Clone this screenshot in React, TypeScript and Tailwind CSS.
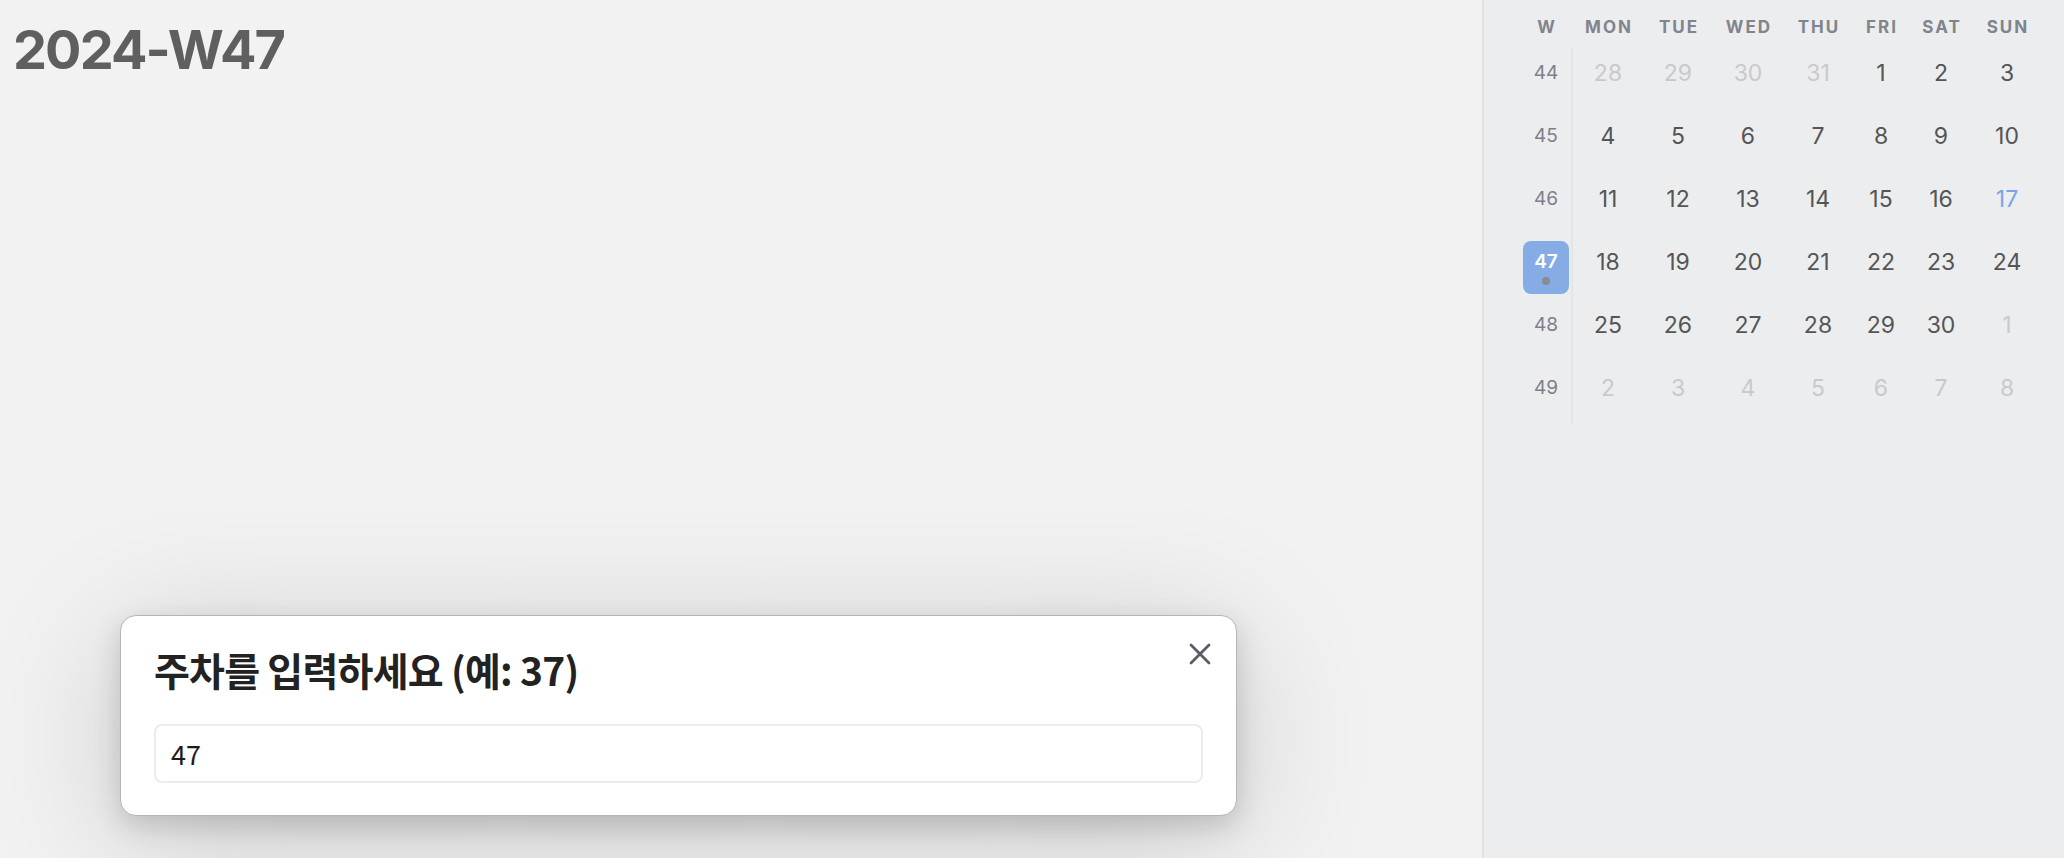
import React from 'react';

type Day = { n: number; tone: 'muted' | 'normal' | 'today' };

const weeks: { w: number; days: Day[] }[] = [
  { w: 44, days: [28, 29, 30, 31].map((n) => ({ n, tone: 'muted' as const })).concat([1, 2, 3].map((n) => ({ n, tone: 'normal' as const }))) },
  { w: 45, days: [4, 5, 6, 7, 8, 9, 10].map((n) => ({ n, tone: 'normal' as const })) },
  { w: 46, days: [11, 12, 13, 14, 15, 16].map((n) => ({ n, tone: 'normal' as const })).concat([{ n: 17, tone: 'today' as const }]) },
  { w: 47, days: [18, 19, 20, 21, 22, 23, 24].map((n) => ({ n, tone: 'normal' as const })) },
  { w: 48, days: [25, 26, 27, 28, 29, 30].map((n) => ({ n, tone: 'normal' as const })).concat([{ n: 1, tone: 'muted' as const }]) },
  { w: 49, days: [2, 3, 4, 5, 6, 7, 8].map((n) => ({ n, tone: 'muted' as const })) },
];

const heads = ['MON', 'TUE', 'WED', 'THU', 'FRI', 'SAT', 'SUN'];

const toneClass = {
  muted: 'text-[#c9c9cb]',
  normal: 'text-[#555555]',
  today: 'text-[#76a5ea]',
};

const Calendar = () => (
  <div className="pl-[37px] font-['Inter',sans-serif]">
    <div className="grid grid-cols-[52px_70px_70px_70px_70px_56px_64px_68px]">
      {/* header */}
      <div className="h-[47px] pt-[18px] text-center text-[17px] leading-[18px] font-bold tracking-[0.12em] text-[#80848c]">W</div>
      {heads.map((h) => (
        <div key={h} className="h-[47px] pt-[18px] pl-[0.12em] text-center text-[17px] leading-[18px] font-bold tracking-[0.12em] text-[#80848c]">
          {h}
        </div>
      ))}

      {weeks.map((row) => (
        <React.Fragment key={row.w}>
          <div className="h-[63px] flex items-center justify-center border-r-2 border-[#e4e5e7]">
            {row.w === 47 ? (
              <div className="w-[46px] h-[53px] rounded-[8px] bg-[#85ace5] flex flex-col items-center justify-center">
                <span className="text-[19px] leading-[24px] font-semibold text-white">47</span>
                <span className="mt-[3px] w-[8px] h-[8px] rounded-full bg-[#8a8b90]" />
              </div>
            ) : (
              <div className="flex flex-col items-center">
                <span className="text-[19px] leading-[24px] text-[#7d8089]">{row.w}</span>
                <span className="mt-[3px] w-[8px] h-[8px]" />
              </div>
            )}
          </div>
          {row.days.map((d, i) => (
            <div key={i} className="h-[63px] flex flex-col items-center justify-center">
              <span className={`text-[23px] leading-[24px] ${toneClass[d.tone]}`}>{d.n}</span>
              <span className="mt-[3px] w-[8px] h-[8px]" />
            </div>
          ))}
        </React.Fragment>
      ))}
    </div>
  </div>
);

const WeekPrompt = () => (
  <div className="absolute left-[120px] top-[615px] w-[1117px] h-[201px] rounded-[16px] bg-white border border-[#b5b5b5] shadow-[0_24px_140px_rgba(0,0,0,0.17),0_10px_28px_rgba(0,0,0,0.16)] px-[33px] pt-[29px]">
    <button className="absolute top-[26px] right-[24px] w-[24px] h-[24px] flex items-center justify-center">
      <svg width="22" height="22" viewBox="0 0 22 22" fill="none" stroke="#5a5d68" strokeWidth="2.8" strokeLinecap="round">
        <line x1="2" y1="2" x2="20" y2="20" />
        <line x1="20" y1="2" x2="2" y2="20" />
      </svg>
    </button>
    <h2 className="text-[39px] leading-[49px] font-bold tracking-[-0.02em] text-[#222222] font-['Noto_Sans_CJK_KR','Noto_Sans',sans-serif]">
      주차를 입력하세요 (예: 37)
    </h2>
    <input
      readOnly
      value="47"
      className="mt-[30px] w-full h-[59px] rounded-[8px] border-2 border-[#ececef] px-[15px] text-[27px] text-[#1c1c1c] outline-none font-['Noto_Sans_CJK_KR','Noto_Sans',sans-serif]"
    />
  </div>
);

export default function App() {
  return (
    <div className="flex w-full h-[858px] overflow-hidden bg-[#f2f2f2]">
      <div className="relative flex-1">
        <h1 className="pl-[13px] pt-[20px] text-[54px] leading-[60px] font-bold tracking-[-0.035em] text-[#5f5f5f] font-['Inter',sans-serif]">
          2024-W47
        </h1>
        <WeekPrompt />
      </div>
      <aside className="w-[582px] h-full bg-[#ecedef] border-l-2 border-[#e2e2e4]">
        <Calendar />
      </aside>
    </div>
  );
}
